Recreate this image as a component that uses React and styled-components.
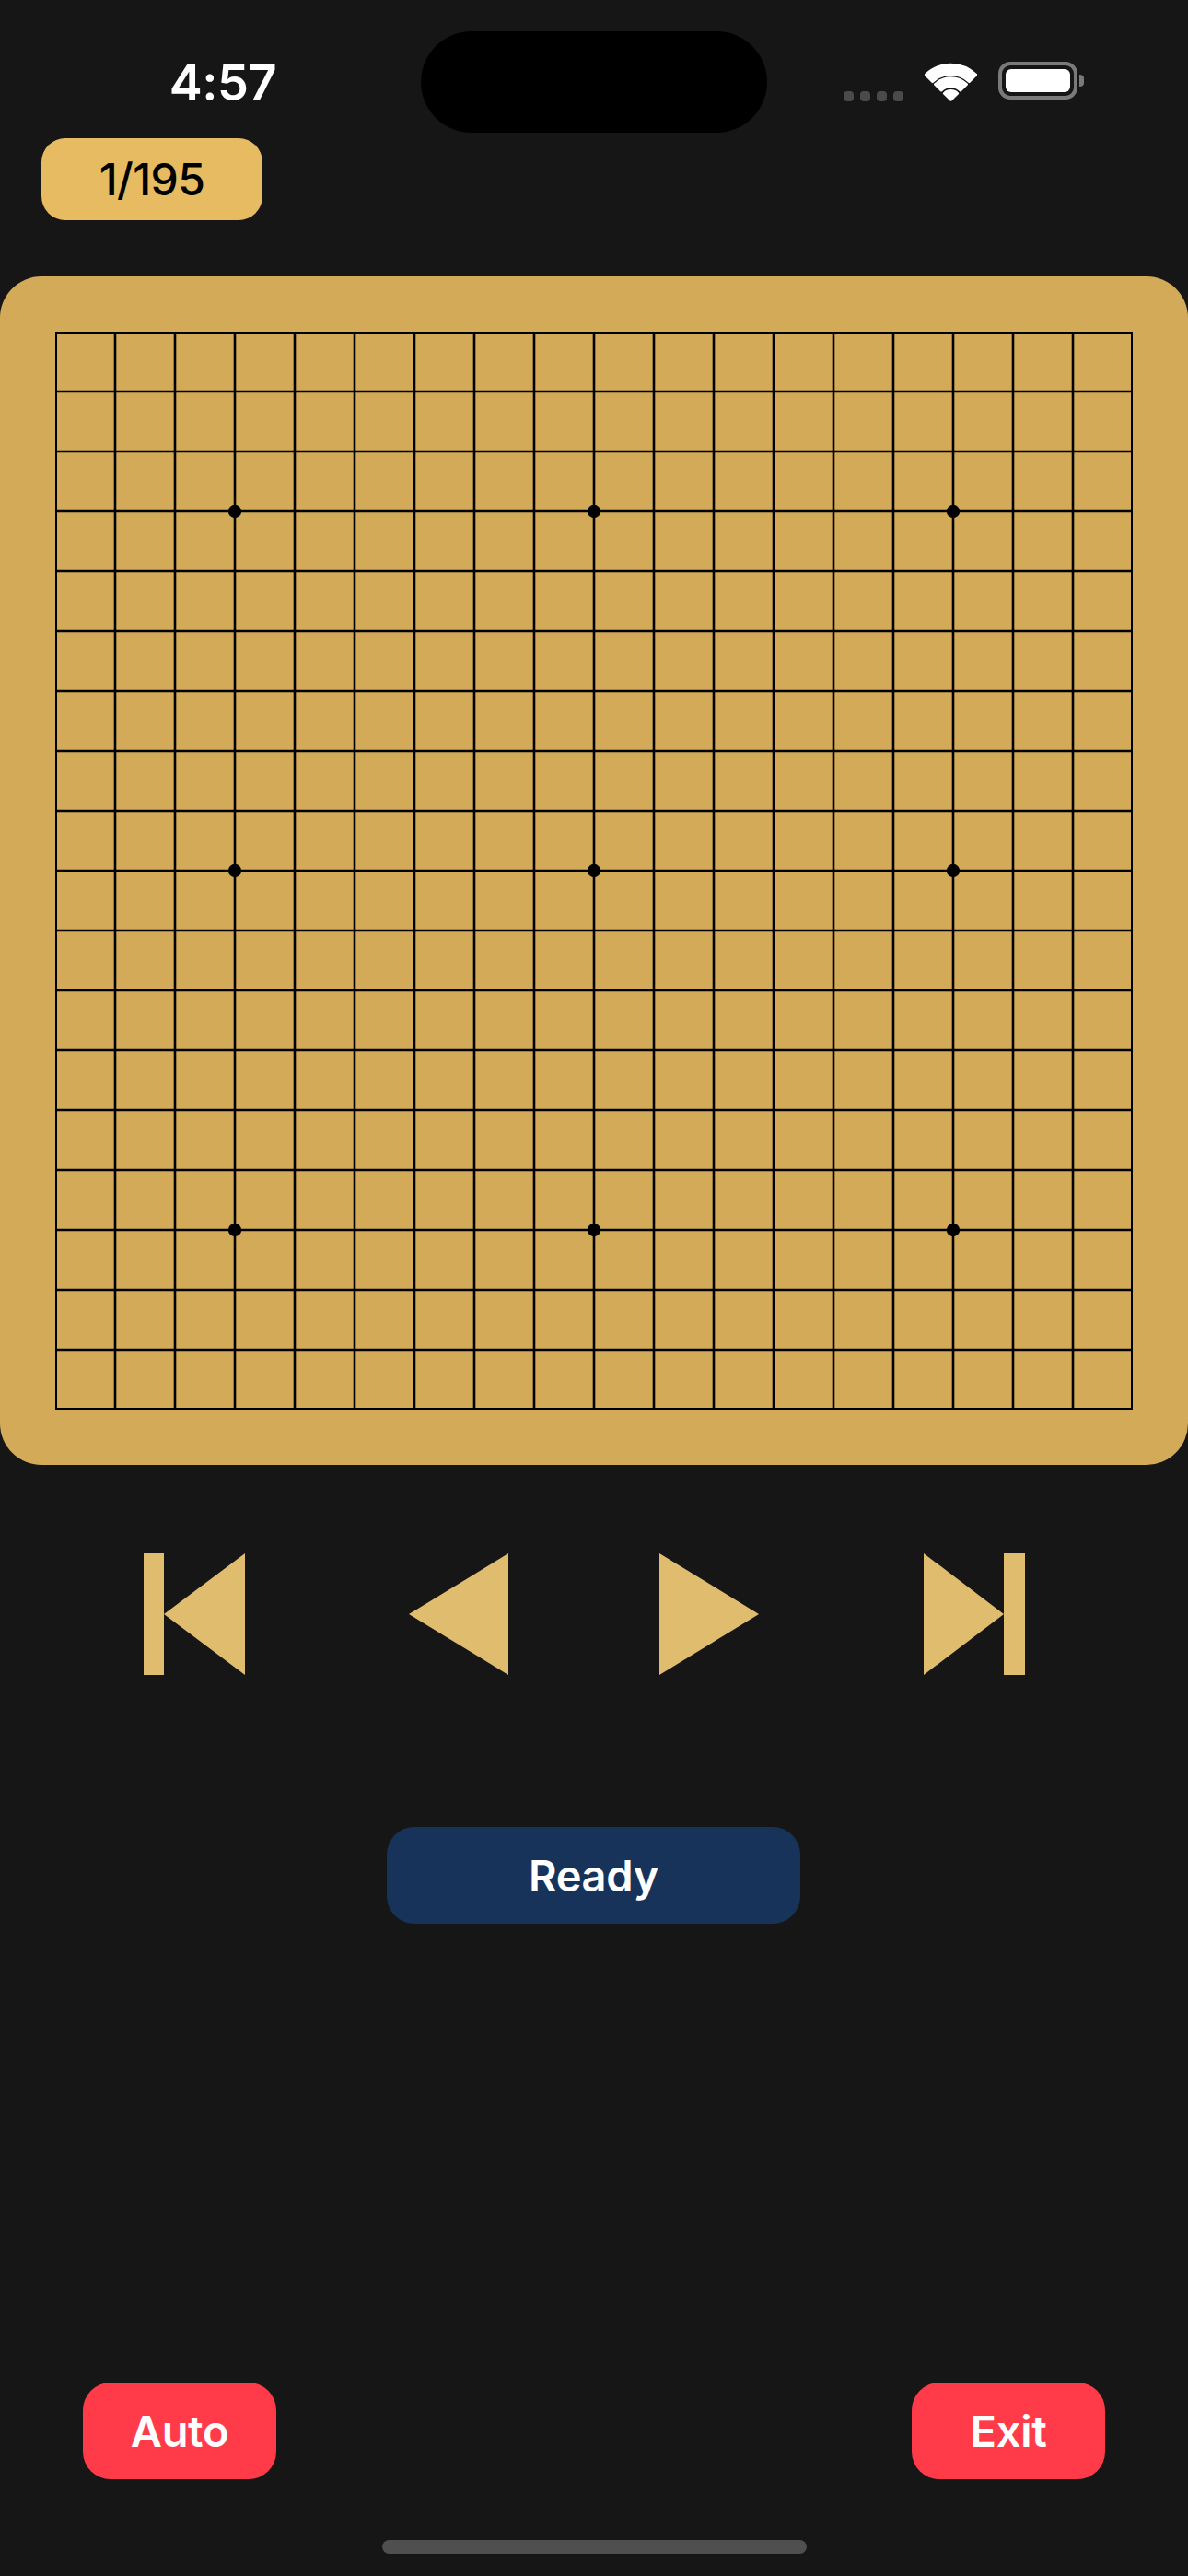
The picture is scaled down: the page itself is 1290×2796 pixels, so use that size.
import React from "react";
import styled, { createGlobalStyle } from "styled-components";

const GlobalStyle = createGlobalStyle`
  html, body {
    margin: 0;
    padding: 0;
    background: #161616;
  }
  body {
    font-family: Inter, "Noto Sans", "Liberation Sans", sans-serif;
    -webkit-font-smoothing: antialiased;
  }
  * { box-sizing: border-box; }
`;

const Screen = styled.div`
  width: 1290px;
  min-height: 2796px;
  background: #161616;
  display: flex;
  flex-direction: column;
`;

const StatusBar = styled.div`
  display: flex;
  align-items: center;
  height: 110px;
  margin-top: 34px;
`;

const TimeSlot = styled.div`
  width: 457px;
  padding-left: 27px;
  text-align: center;
  color: #ffffff;
  font-size: 54px;
  font-weight: 600;
  letter-spacing: -0.5px;
  line-height: 1;
  padding-top: 2px;
`;

const Island = styled.div`
  width: 376px;
  height: 110px;
  border-radius: 55px;
  background: #000000;
`;

const StatusIcons = styled.div`
  display: flex;
  align-items: flex-end;
  margin-left: 83px;
  height: 42px;
`;

const SignalDots = styled.div`
  display: flex;
  gap: 7px;
`;

const Dot = styled.span`
  width: 11px;
  height: 11px;
  border-radius: 4px;
  background: #4a4a4a;
`;

const WifiIcon = styled.svg`
  margin-left: 23px;
  display: block;
`;

const BatteryIcon = styled.svg`
  margin-left: 23px;
  display: block;
  margin-bottom: 2px;
`;

const MoveBadge = styled.div`
  margin: 6px 0 0 45px;
  width: 240px;
  height: 89px;
  border-radius: 26px;
  background: #e6bb62;
  color: #000000;
  display: flex;
  align-items: center;
  justify-content: center;
  font-size: 48px;
  font-weight: 500;
  letter-spacing: -0.6px;
`;

const Board = styled.div`
  margin-top: 61px;
  width: 1290px;
  height: 1290px;
  border-radius: 45px;
  background: #d3ab58;
  padding: 60px;
`;

const GridSvg = styled.svg`
  display: block;
  width: 1170px;
  height: 1170px;
  overflow: visible;
`;

const ControlRow = styled.div`
  display: flex;
  align-items: center;
  margin-top: 96px;
  padding-left: 156px;
  height: 132px;
`;

const ControlButton = styled.button`
  border: none;
  background: transparent;
  padding: 0;
  margin: 0 0 0 ${(p) => p.$offset || 0}px;
  display: block;
  cursor: pointer;
  svg { display: block; }
`;

const ReadyButton = styled.button`
  align-self: center;
  margin-top: 165px;
  margin-right: 1px;
  width: 449px;
  height: 105px;
  border-radius: 30px;
  border: none;
  background: #18335a;
  color: #ffffff;
  font-family: Inter, "Noto Sans", sans-serif;
  font-size: 47px;
  font-weight: 600;
  letter-spacing: -0.3px;
`;

const BottomRow = styled.div`
  display: flex;
  justify-content: space-between;
  padding: 0 90px;
  margin-top: 498px;
`;

const RedButton = styled.button`
  width: 210px;
  height: 105px;
  border-radius: 30px;
  border: none;
  background: #ff3b4a;
  color: #ffffff;
  font-family: Inter, "Noto Sans", sans-serif;
  font-size: 47px;
  font-weight: 600;
  letter-spacing: -0.3px;
`;

const HomeIndicator = styled.div`
  align-self: center;
  margin-top: 66px;
  width: 461px;
  height: 15px;
  border-radius: 8px;
  background: #4f4f4f;
`;

const GOLD = "#e0bd6e";

function Wifi() {
  return (
    <WifiIcon width="57" height="42" viewBox="0 0 57 42">
      <g fill="#ffffff" stroke="#ffffff" strokeWidth="2.5" strokeLinejoin="round">
        <path d="M0.9 13.2 A39.5 39.5 0 0 1 56.1 13.2 L48.4 20.9 A28.6 28.6 0 0 0 8.6 20.9 Z" />
        <path d="M11.3 23.5 A24.6 24.6 0 0 1 45.7 23.5 L38.9 30.3 A15 15 0 0 0 18.1 30.3 Z" />
        <path d="M21.1 33.3 A10.8 10.8 0 0 1 35.9 33.3 L28.5 40.5 Z" />
      </g>
    </WifiIcon>
  );
}

function Battery() {
  return (
    <BatteryIcon width="94" height="41" viewBox="0 0 94 41">
      <rect x="2" y="2" width="82" height="37" rx="11" fill="none" stroke="#7a7a7a" strokeWidth="4" />
      <rect x="8" y="8" width="70" height="25" rx="6" fill="#ffffff" />
      <path d="M88 14 Q93 14 93 18 L93 23 Q93 27 88 27 Z" fill="#7a7a7a" />
    </BatteryIcon>
  );
}

function BoardGrid() {
  const cell = 65;
  const n = 18;
  const inner = [];
  for (let i = 1; i < n; i++) {
    inner.push(<line key={"v" + i} x1={i * cell} y1={0} x2={i * cell} y2={n * cell} />);
    inner.push(<line key={"h" + i} x1={0} y1={i * cell} x2={n * cell} y2={i * cell} />);
  }
  const stars = [];
  [3, 9, 15].forEach((r) =>
    [3, 9, 15].forEach((c) =>
      stars.push(<circle key={r + "-" + c} cx={c * cell} cy={r * cell} r="7.2" fill="#000" />)
    )
  );
  return (
    <GridSvg viewBox="0 0 1170 1170">
      <g stroke="#000" strokeWidth="2.6">{inner}</g>
      <rect x="1" y="1" width="1168" height="1168" fill="none" stroke="#000" strokeWidth="2" />
      {stars}
    </GridSvg>
  );
}

export default function App() {
  return (
    <>
      <GlobalStyle />
      <Screen>
        <StatusBar>
          <TimeSlot>4:57</TimeSlot>
          <Island />
          <StatusIcons>
            <SignalDots>
              <Dot />
              <Dot />
              <Dot />
              <Dot />
            </SignalDots>
            <Wifi />
            <Battery />
          </StatusIcons>
        </StatusBar>

        <MoveBadge>1/195</MoveBadge>

        <Board>
          <BoardGrid />
        </Board>

        <ControlRow>
          <ControlButton aria-label="First move">
            <svg width="110" height="132" viewBox="0 0 110 132">
              <rect x="0" y="0" width="22" height="132" fill={GOLD} />
              <polygon points="22,66 110,0 110,132" fill={GOLD} />
            </svg>
          </ControlButton>
          <ControlButton aria-label="Previous move" $offset={178}>
            <svg width="108" height="132" viewBox="0 0 108 132">
              <polygon points="0,66 108,0 108,132" fill={GOLD} />
            </svg>
          </ControlButton>
          <ControlButton aria-label="Next move" $offset={164}>
            <svg width="108" height="132" viewBox="0 0 108 132">
              <polygon points="0,0 108,66 0,132" fill={GOLD} />
            </svg>
          </ControlButton>
          <ControlButton aria-label="Last move" $offset={179}>
            <svg width="110" height="132" viewBox="0 0 110 132">
              <polygon points="0,0 87,66 0,132" fill={GOLD} />
              <rect x="87" y="0" width="23" height="132" fill={GOLD} />
            </svg>
          </ControlButton>
        </ControlRow>

        <ReadyButton>Ready</ReadyButton>

        <BottomRow>
          <RedButton>Auto</RedButton>
          <RedButton>Exit</RedButton>
        </BottomRow>

        <HomeIndicator />
      </Screen>
    </>
  );
}
